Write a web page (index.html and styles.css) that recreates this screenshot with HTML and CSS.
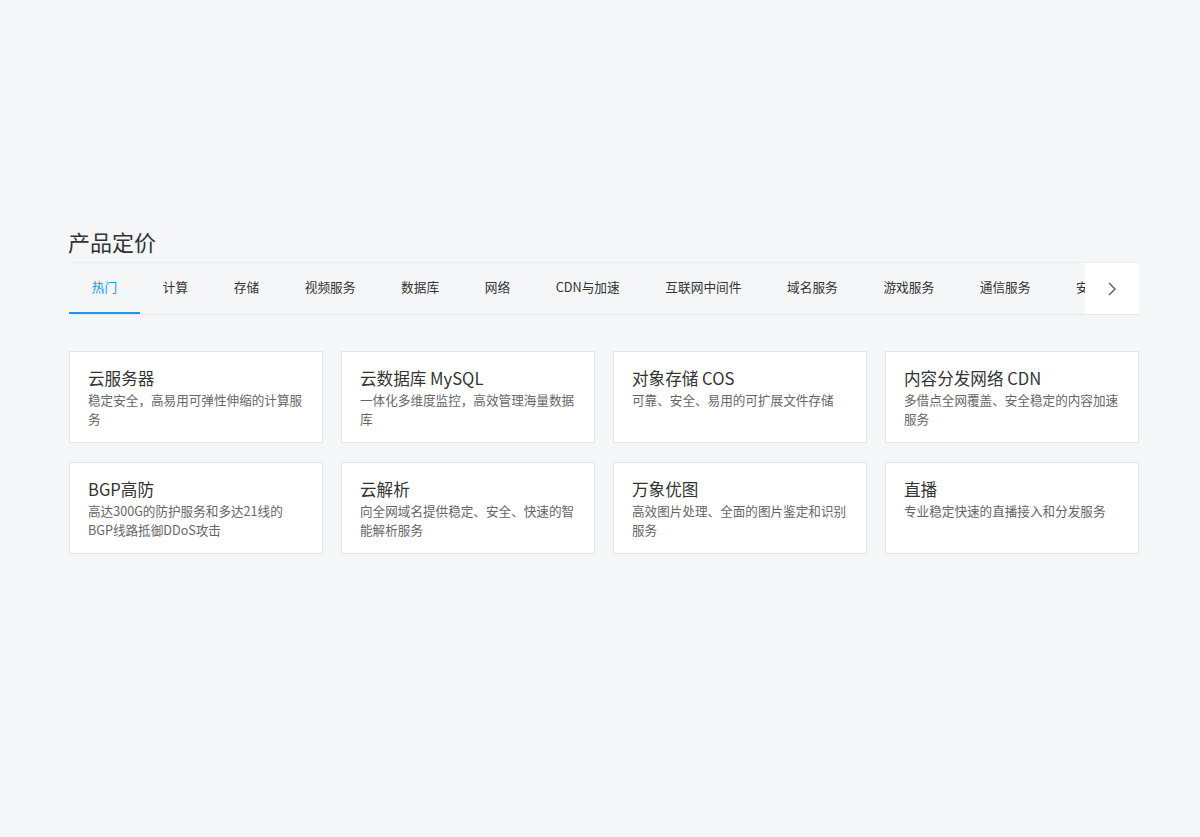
FILE: index.html
```html
<!DOCTYPE html>
<html lang="zh-CN">
<head>
<meta charset="utf-8">
<title>产品定价</title>
<link rel="stylesheet" href="styles.css">
</head>
<body>
<div class="page">
  <h2 class="title">产品定价</h2>
  <div class="tabbar">
    <div class="tabs">
      <span class="tab active">热门</span>
      <span class="tab">计算</span>
      <span class="tab">存储</span>
      <span class="tab">视频服务</span>
      <span class="tab">数据库</span>
      <span class="tab">网络</span>
      <span class="tab">CDN与加速</span>
      <span class="tab">互联网中间件</span>
      <span class="tab">域名服务</span>
      <span class="tab">游戏服务</span>
      <span class="tab">通信服务</span>
      <span class="tab">安全</span>
    </div>
    <div class="arrow">
      <svg width="10" height="16" viewBox="0 0 10 16"><path d="M2 2 L8 8 L2 14" fill="none" stroke="#666" stroke-width="1.5"/></svg>
    </div>
  </div>
  <div class="grid">
    <div class="card"><div class="card-title">云服务器</div><div class="card-desc">稳定安全，高易用可弹性伸缩的计算服务</div></div>
    <div class="card"><div class="card-title">云数据库 MySQL</div><div class="card-desc">一体化多维度监控，高效管理海量数据库</div></div>
    <div class="card"><div class="card-title">对象存储 COS</div><div class="card-desc">可靠、安全、易用的可扩展文件存储</div></div>
    <div class="card"><div class="card-title">内容分发网络 CDN</div><div class="card-desc">多借点全网覆盖、安全稳定的内容加速服务</div></div>
    <div class="card"><div class="card-title">BGP高防</div><div class="card-desc">高达300G的防护服务和多达21线的BGP线路抵御DDoS攻击</div></div>
    <div class="card"><div class="card-title">云解析</div><div class="card-desc">向全网域名提供稳定、安全、快速的智能解析服务</div></div>
    <div class="card"><div class="card-title">万象优图</div><div class="card-desc">高效图片处理、全面的图片鉴定和识别服务</div></div>
    <div class="card"><div class="card-title">直播</div><div class="card-desc">专业稳定快速的直播接入和分发服务</div></div>
  </div>
</div>
</body>
</html>
```
FILE: styles.css
```css
html, body {
  margin: 0;
  padding: 0;
  background: #f5f6f8;
}
body {
  font-family: "Noto Sans CJK SC", "Microsoft YaHei", "Liberation Sans", sans-serif;
  color: #333;
}
.page {
  width: 1070px;
  margin-left: 69px;
  padding-top: 226px;
}
.title {
  margin: 0 0 6px -1px;
  font-size: 22px;
  font-weight: normal;
  line-height: 30px;
  color: #333;
}
.tabbar {
  display: flex;
  height: 51px;
  border-top: 1px solid #ebedf0;
  border-bottom: 1px solid #e6e8eb;
}
.tabs {
  flex: 1;
  display: flex;
  overflow: hidden;
  white-space: nowrap;
}
.tab {
  flex: none;
  padding: 0 22.8px;
  font-size: 12.7px;
  line-height: 48px;
  height: 49px;
  color: #333;
  border-bottom: 2px solid transparent;
}
.tab.active {
  color: #1a99e6;
  border-bottom-color: #1a99e6;
}
.arrow {
  flex: none;
  width: 54px;
  background: #fff;
  display: flex;
  align-items: center;
  justify-content: center;
}
.grid {
  margin-top: 36px;
  display: grid;
  grid-template-columns: repeat(4, 254px);
  column-gap: 18px;
  row-gap: 19px;
}
.card {
  box-sizing: border-box;
  height: 92px;
  background: #fff;
  border: 1px solid #e3e5e8;
  padding: 14px 16px 0 18px;
}
.card-title {
  font-size: 16.6px;
  line-height: 24px;
  color: #333;
}
.card-desc {
  font-size: 12.6px;
  line-height: 19px;
  color: #666;
}
```
